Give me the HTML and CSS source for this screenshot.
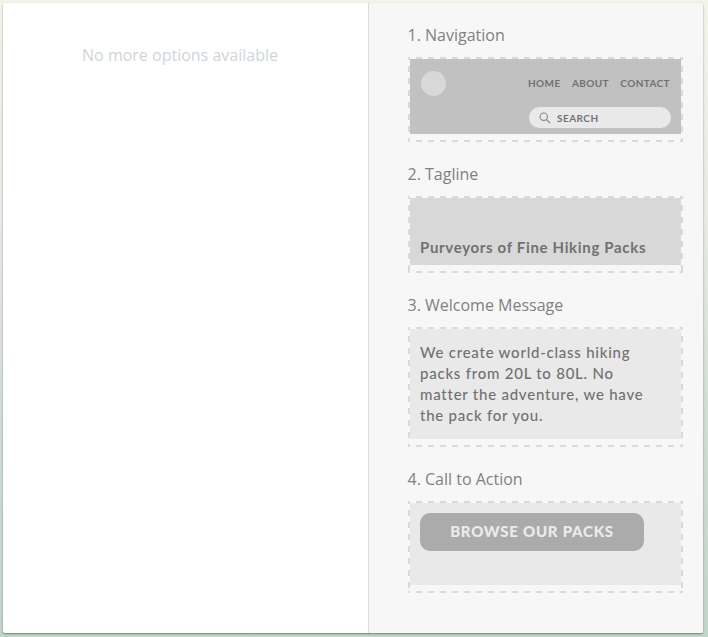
FILE: index.html
```
<!DOCTYPE html>
<html lang="en">
<head>
<meta charset="utf-8">
<title>Page sections</title>
<link rel="stylesheet" href="styles.css">
</head>
<body>
<main class="panel">
  <section class="options"><p>No more options available</p></section>
  <section class="sections">
    <h2>1. Navigation</h2>
    <div class="slot slot-nav">
      <div class="block nav">
        <span class="logo"></span>
        <div class="nav-right">
          <nav><span>HOME</span><span>ABOUT</span><span>CONTACT</span></nav>
          <div class="search">
            <svg width="12" height="12" viewBox="0 0 12 12" fill="none" stroke="#858585" stroke-width="1.1"><circle cx="4.7" cy="4.7" r="3.7"/><path d="M7.4 7.4L11 11"/></svg>
            <span>SEARCH</span>
          </div>
        </div>
      </div>
    </div>
    <h2>2. Tagline</h2>
    <div class="slot slot-tag"><div class="block tagline">Purveyors of Fine Hiking Packs</div></div>
    <h2>3. Welcome Message</h2>
    <div class="slot slot-msg"><div class="block message">We create world-class hiking<br>packs from 20L to 80L. No<br>matter the adventure, we have<br>the pack for you.</div></div>
    <h2>4. Call to Action</h2>
    <div class="slot slot-cta"><div class="block cta"><div class="button">BROWSE OUR PACKS</div></div></div>
  </section>
</main>
</body>
</html>
```
FILE: styles.css
```
* { box-sizing: border-box; }
body {
  margin: 0;
  height: 637px;
  padding: 3px;
  overflow: hidden;
  background: linear-gradient(#f2f3e9, #e8eae3 35%, #d0ddd3 65%, #c2d5ca);
  font-family: "Open Sans", sans-serif;
}
.panel {
  display: flex;
  width: 700px;
  height: 630px;
  border-radius: 2px;
  overflow: hidden;
  background: #fff;
  box-shadow: 0 1px 2px rgba(0, 0, 0, .4);
}
.options {
  width: 365px;
  padding-top: 40px;
  text-align: center;
  color: #ced5da;
  font-size: 16px;
  line-height: 24px;
}
.options p { margin: 0; padding-right: 11px; }
.sections {
  flex: 1;
  padding: 20px 20px 0 39px;
  border-left: 1px solid #dcdcdc;
  background: #f7f7f7;
}
h2 {
  margin: 0 0 10px -0.5px;
  font-size: 16px;
  font-weight: 400;
  line-height: 24px;
  color: #7f8182;
}
.slot {
  width: 275px;
  padding: 2px;
  background:
    repeating-linear-gradient(90deg, #dadada 0 2px, transparent 2px 8px, #dadada 8px 14px, transparent 14px 14px) 0 0 / 12px 2px repeat-x,
    repeating-linear-gradient(90deg, #dadada 0 2px, transparent 2px 8px, #dadada 8px 12px) 0 100% / 100% 2px no-repeat,
    repeating-linear-gradient(#dadada 0 3px, transparent 3px 9px, #dadada 9px 12px) 0 0 / 2px 100% no-repeat,
    repeating-linear-gradient(#dadada 0 3px, transparent 3px 9px, #dadada 9px 12px) 100% 0 / 2px 100% no-repeat;
}
.slot-nav { height: 85px; margin-bottom: 20px; }
.slot-tag { height: 77px; margin-bottom: 20px; }
.slot-msg { height: 120px; margin-bottom: 20px; }
.slot-cta { height: 92px; }
.block {
  width: 271px;
  font-family: Lato, sans-serif;
  font-weight: 700;
  color: #717171;
  white-space: nowrap;
}
.nav {
  display: flex;
  justify-content: space-between;
  height: 75px;
  padding: 12px 10px 0 11px;
  background: #c1c1c1;
}
.logo { width: 25px; height: 25px; border-radius: 50%; background: #d8d8d8; }
.nav-right { width: 142px; }
nav {
  display: flex;
  justify-content: space-between;
  margin-left: -1px;
  padding: 4px 1px 0 0;
  font-size: 10px;
  line-height: 16px;
  letter-spacing: .4px;
}
.search {
  display: flex;
  align-items: center;
  gap: 6px;
  height: 21px;
  margin-top: 16px;
  padding-left: 10px;
  border-radius: 11px;
  background: #e9e9e9;
  font-size: 10px;
  letter-spacing: .45px;
}
.tagline { height: 67px; padding: 37px 10px 0; background: #d8d8d8; font-size: 15px; line-height: 24px; letter-spacing: .67px; }
.message { height: 110px; padding: 13px 10px 0; background: #e9e9e9; font-size: 15px; line-height: 21px; letter-spacing: .76px; font-weight: 500; }
.cta { height: 82px; padding: 10px; background: #e9e9e9; }
.button {
  width: 224px;
  height: 38px;
  border-radius: 10px;
  background: #ababab;
  color: #ebebeb;
  font-size: 15px;
  font-weight: 900;
  line-height: 37px;
  letter-spacing: .75px;
  text-align: center;
}
```
